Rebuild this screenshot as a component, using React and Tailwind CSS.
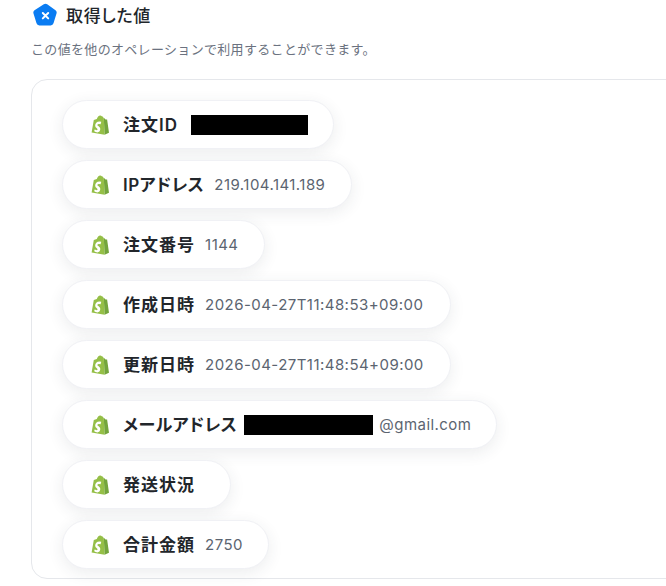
const rows = [
  { label: "注文ID", redact: "ml-[13px] w-[117px]", width: "w-[272px]" },
  { label: "IPアドレス", kana: true, value: "219.104.141.189", width: "w-[290px]" },
  { label: "注文番号", value: "1144", width: "w-[203px]" },
  { label: "作成日時", value: "2026-04-27T11:48:53+09:00", width: "w-[389px]" },
  { label: "更新日時", value: "2026-04-27T11:48:54+09:00", width: "w-[389px]" },
  { label: "メールアドレス", kana: true, redact: "ml-[7px] w-[129px]", value: "@gmail.com", valueGap: "ml-[6px]", width: "w-[435px]" },
  { label: "発送状況", width: "w-[169px]" },
  { label: "合計金額", value: "2750", width: "w-[207px]" },
];

function ShopifyIcon() {
  return (
    <svg width="18" height="20" viewBox="0 0 18 20" className="shrink-0">
      <path d="M.6 17.600 2.800 5l3-1C6.400 2 7.700.4 9.200.4c.7 0 1.200.4 1.500.9h.6L12.800 3l.8 16.800z" fill="#95bf47" />
      <path d="M12.800 3 13.400 3.200l1.100 1.300 1.600.1 1.900 13.200-4.400 2z" fill="#74a53c" />
      <path
        d="M10.400 6.600 9.500 9.400s-.8-.4-1.700-.4c-1.300 0-1.400.8-1.400 1 0 1.100 2.900 1.500 2.900 4.100 0 2-1.300 3.300-3 3.300-2 0-3.100-1.300-3.100-1.300l.6-1.800s1.100.9 1.900.9c.6 0 .8-.4.800-.8 0-1.500-2.300-1.500-2.300-3.900 0-2 1.500-4 4.300-4 1.100 0 1.900.6 1.900.6z"
        fill="#fff"
      />
    </svg>
  );
}

function Pill({ row }) {
  return (
    <div
      className={`flex h-[49px] ${row.width} items-center rounded-full border border-[#f0f1f5] bg-white pl-[28px] shadow-[0_4px_16px_rgba(40,50,70,0.09)]`}
    >
      <ShopifyIcon />
      <span
        className={`ml-[14px] text-[17px] font-semibold leading-6 ${row.kana ? "tracking-[0.03em]" : "tracking-[0.06em]"} text-[#22262b] [font-feature-settings:'palt']`}
      >
        {row.label}
      </span>
      {row.redact && <span className={`h-[20px] ${row.redact} bg-black`} />}
      {row.value && (
        <span className={`${row.valueGap || "ml-[10px]"} text-[15px] leading-6 tracking-[0.03em] text-[#5b6470]`}>
          {row.value}
        </span>
      )}
    </div>
  );
}

export default function App() {
  return (
    <div className="h-[586px] w-[666px] overflow-hidden bg-white pl-[31px] font-['Inter','Noto_Sans_CJK_JP',sans-serif]">
      <div className="flex items-center gap-[8px] pl-[2px] pt-[3px]">
        <svg width="25" height="25" viewBox="0 0 25 25" className="shrink-0">
          <path
            d="M10.800 1.300a3 3 0 0 1 3.400 0l8.300 6a3 3 0 0 1 1 3.300l-3 9.700a3 3 0 0 1-2.800 2.100H6.300a3 3 0 0 1-2.800-2.100l-3-9.700a3 3 0 0 1 1-3.300z"
            fill="#0a7cf2"
          />
          <path d="M9.800 10 15.200 15.400M15.200 10 9.800 15.400" stroke="#fff" strokeWidth="2" strokeLinecap="round" />
        </svg>
        <h2 className="text-[17px] font-medium leading-6 tracking-[0.04em] text-[#22262b] [font-feature-settings:'palt']">
          取得した値
        </h2>
      </div>
      <p className="mt-[11px] text-[13px] leading-5 tracking-[0.025em] text-[#6b7280]">
        この値を他のオペレーションで利用することができます。
      </p>
      <div className="mt-[20px] h-[500px] w-[700px] rounded-l-[16px] border border-[#e5e7eb] pl-[30px] pt-[20px]">
        <div className="flex flex-col gap-[11px]">
          {rows.map((row) => (
            <Pill key={row.label} row={row} />
          ))}
        </div>
      </div>
    </div>
  );
}
